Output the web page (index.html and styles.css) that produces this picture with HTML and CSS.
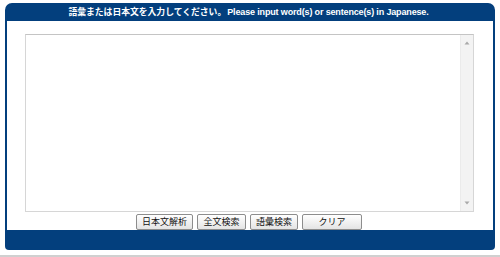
FILE: index.html
```html
<!DOCTYPE html>
<html lang="ja">
<head>
<meta charset="utf-8">
<title>Japanese input</title>
<link rel="stylesheet" href="styles.css">
</head>
<body>
<div class="panel">
  <div class="panel-head">
    <span class="head-ja">語彙または日本文を入力してください。</span>
    <span class="head-en">Please input word(s) or sentence(s) in Japanese.</span>
  </div>
  <div class="panel-body">
    <div class="field">
      <textarea class="input"></textarea>
      <div class="scrollbar" aria-hidden="true">
        <svg class="arrow" width="12" height="12" viewBox="0 0 12 12"><path d="M3.5 7.5L6 4.5L8.5 7.5Z" fill="#a9a9a9"/></svg>
        <svg class="arrow" width="12" height="12" viewBox="0 0 12 12"><path d="M3.5 4.5L6 7.5L8.5 4.5Z" fill="#a9a9a9"/></svg>
      </div>
    </div>
    <div class="actions">
      <button class="btn w57">日本文解析</button>
      <button class="btn w49">全文検索</button>
      <button class="btn w48">語彙検索</button>
      <button class="btn w60">クリア</button>
    </div>
  </div>
  <div class="panel-foot"></div>
</div>
<div class="rule"></div>
</body>
</html>
```

FILE: styles.css
```css
html, body {
  margin: 0;
  padding: 0;
  background: #ffffff;
}
body {
  width: 500px;
  height: 257px;
  overflow: hidden;
  font-family: "Liberation Sans", Arial, "Noto Sans CJK JP", sans-serif;
}
.panel {
  width: 490px;
  margin: 3px 0 0 5px;
}
.panel-head {
  height: 18px;
  background: #033f7d;
  border-radius: 7px 7px 0 0;
  color: #ffffff;
  font-weight: bold;
  display: flex;
  justify-content: center;
  align-items: center;
  gap: 1px;
  padding-right: 3px;
}
.head-ja {
  font-family: "Noto Sans CJK JP", sans-serif;
  font-size: 8.8px;
  line-height: 18px;
}
.head-en {
  font-size: 9px;
  letter-spacing: -0.15px;
  line-height: 18px;
}
.panel-body {
  background: #ffffff;
  border-left: 2px solid #033f7d;
  border-right: 2px solid #033f7d;
  padding: 13px 0 2px 18px;
  height: 194px;
}
.field {
  position: relative;
  width: 449px;
  height: 178px;
}
.input {
  display: block;
  box-sizing: border-box;
  width: 100%;
  height: 100%;
  margin: 0;
  padding: 2px 16px 2px 2px;
  resize: none;
  border: 1px solid #d6d6d6;
  border-top-color: #c4c4c4;
  overflow: hidden;
  background: #ffffff;
  outline: none;
}
.scrollbar {
  position: absolute;
  top: 1px;
  right: 1px;
  bottom: 1px;
  width: 12px;
  background: #f3f3f3;
  border-left: 1px solid #ebebeb;
  display: flex;
  flex-direction: column;
  justify-content: space-between;
  padding: 2px 0;
}
.arrow {
  display: block;
}
.actions {
  display: flex;
  justify-content: center;
  gap: 4px;
  margin-top: 2px;
  padding-right: 20px;
}
.btn {
  box-sizing: border-box;
  height: 16px;
  padding: 0;
  margin: 0;
  border: 1px solid #8d8d8d;
  border-radius: 2px;
  background: linear-gradient(#ffffff, #e4e4e4);
  color: #111111;
  font-family: "Noto Sans CJK JP", sans-serif;
  font-size: 9px;
  line-height: 14px;
}
.w57 { width: 57px; }
.w49 { width: 49px; }
.w48 { width: 48px; }
.w60 { width: 60px; }
.panel-foot {
  height: 20px;
  background: #033f7d;
  border-radius: 0 0 4px 4px;
}
.rule {
  margin-top: 5px;
  height: 2px;
  background: #d0d0d0;
}
```
